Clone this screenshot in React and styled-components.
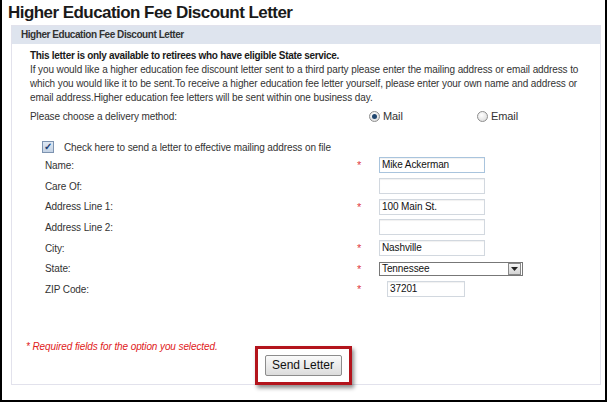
import React from "react";
import styled, { createGlobalStyle } from "styled-components";

const GlobalStyle = createGlobalStyle`
  html, body {
    margin: 0;
    padding: 0;
    background: #ffffff;
  }
  body {
    font-family: "Liberation Sans", Arial, sans-serif;
    color: #222;
  }
`;

const fields = [
  { label: "Name:", required: true, value: "Mike Ackerman", active: true },
  { label: "Care Of:", required: false, value: "" },
  { label: "Address Line 1:", required: true, value: "100 Main St." },
  { label: "Address Line 2:", required: false, value: "" },
  { label: "City:", required: true, value: "Nashville" },
  { label: "State:", required: true, value: "Tennessee", select: true },
  { label: "ZIP Code:", required: true, value: "37201", zip: true },
];

const App = () => {
  return (
    <Frame>
      <GlobalStyle />
      <Title>Higher Education Fee Discount Letter</Title>
      <Panel>
        <PanelHeader>Higher Education Fee Discount Letter</PanelHeader>
        <PanelBody>
          <Intro>
            <strong>This letter is only available to retirees who have eligible State service.</strong>
            <br />
            If you would like a higher education fee discount letter sent to a third party please enter the mailing address or email address to which you would like it to be sent.To receive a higher education fee letter yourself, please enter your own name and address or email address.Higher education fee letters will be sent within one business day.
          </Intro>
          <DeliveryRow>
            <span>Please choose a delivery method:</span>
            <RadioOption>
              <Radio checked />
              Mail
            </RadioOption>
            <RadioOption>
              <Radio />
              Email
            </RadioOption>
          </DeliveryRow>
          <CheckRow>
            <CheckBox>✓</CheckBox>
            Check here to send a letter to effective mailing address on file
          </CheckRow>
          <FieldGrid>
            {fields.map((f) => (
              <React.Fragment key={f.label}>
                <Label>{f.label}</Label>
                <Star>{f.required ? "*" : ""}</Star>
                {f.select ? (
                  <Select>
                    <span>{f.value}</span>
                    <SelectArrow>
                      <svg width="7" height="4" viewBox="0 0 7 4">
                        <path d="M0 0 L7 0 L3.5 4 Z" fill="#222" />
                      </svg>
                    </SelectArrow>
                  </Select>
                ) : (
                  <Input $active={f.active} $zip={f.zip}>{f.value}</Input>
                )}
              </React.Fragment>
            ))}
          </FieldGrid>
          <RequiredNote>* Required fields for the option you selected.</RequiredNote>
          <ButtonRow>
            <Highlight>
              <SendButton>Send Letter</SendButton>
            </Highlight>
          </ButtonRow>
        </PanelBody>
      </Panel>
    </Frame>
  );
};

const Frame = styled.div`
  width: 607px;
  height: 402px;
  box-sizing: border-box;
  border: 2px solid #000;
  border-top: none;
  padding: 0 4px 0 6px;
  overflow: hidden;
`;

const Title = styled.h1`
  margin: 0;
  padding: 2px 0 0 0;
  font-size: 17px;
  letter-spacing: -0.55px;
  line-height: 22px;
  font-weight: bold;
  color: #1a1a1a;
  height: 23px;
`;

const Panel = styled.div`
  margin-left: 3px;
  border: 1px solid #e2e2ec;
  height: 360px;
  box-sizing: border-box;
`;

const PanelHeader = styled.div`
  background: #dee4ee;
  height: 18px;
  line-height: 18px;
  padding-left: 9px;
  font-size: 10px;
  letter-spacing: -0.45px;
  font-weight: bold;
  color: #333;
`;

const PanelBody = styled.div`
  padding: 5px 0 0 14px;
  font-size: 10px;
  letter-spacing: -0.1px;
  color: #333;
`;

const Intro = styled.div`
  padding-left: 4px;
  padding-right: 12px;
  line-height: 14px;
  strong {
    color: #1a1a1a;
    letter-spacing: -0.3px;
  }
`;

const DeliveryRow = styled.div`
  display: grid;
  grid-template-columns: 339px 108px auto;
  align-items: center;
  padding-left: 4px;
  margin-top: 4px;
  height: 14px;
`;

const RadioOption = styled.span`
  display: flex;
  align-items: center;
  gap: 3px;
  font-size: 11px;
`;

const Radio = styled.span`
  width: 9px;
  height: 9px;
  border-radius: 50%;
  border: 1px solid #8e8e8e;
  background: radial-gradient(circle at 40% 35%, #ffffff, #d6d6d6);
  display: inline-flex;
  align-items: center;
  justify-content: center;
  &::after {
    content: "";
    width: 5px;
    height: 5px;
    border-radius: 50%;
    background: ${(p) => (p.checked ? "#20466f" : "transparent")};
  }
`;

const CheckRow = styled.div`
  display: flex;
  align-items: center;
  gap: 10px;
  margin-top: 17px;
  padding-left: 16px;
  height: 14px;
`;

const CheckBox = styled.span`
  width: 10px;
  height: 10px;
  border: 1px solid #7d93b0;
  background: linear-gradient(#dfe8f3, #c3d2e4);
  color: #1d3e72;
  font-size: 10px;
  line-height: 10px;
  text-align: center;
  font-weight: bold;
`;

const FieldGrid = styled.div`
  display: grid;
  grid-template-columns: 312px 22px auto;
  grid-auto-rows: 20.7px;
  align-items: center;
  padding-left: 19px;
  margin-top: 1px;
`;

const Label = styled.span`
  color: #333;
`;

const Star = styled.span`
  color: #e03a44;
  font-size: 11px;
`;

const Input = styled.div`
  width: ${(p) => (p.$zip ? "72px" : "100px")};
  height: 14px;
  margin-left: ${(p) => (p.$zip ? "8px" : "0")};
  border: 1px solid ${(p) => (p.$active ? "#a9c4dd" : "#d2d8df")};
  box-shadow: inset 0 1px 1px rgba(0, 0, 0, 0.06);
  padding: 0 2px;
  font-size: 10px;
  line-height: 14px;
  color: #111;
`;

const Select = styled.div`
  width: 140px;
  height: 12px;
  border: 1px solid #777;
  display: flex;
  justify-content: space-between;
  align-items: center;
  padding-left: 2px;
  font-size: 10px;
  color: #111;
`;

const SelectArrow = styled.span`
  width: 11px;
  height: 10px;
  margin-right: 1px;
  border: 1px solid #888;
  background: linear-gradient(#f4f4f4, #d4d4d4);
  display: flex;
  align-items: center;
  justify-content: center;
`;

const RequiredNote = styled.div`
  color: #e02020;
  font-style: italic;
  font-size: 10px;
  margin-top: 41px;
`;

const ButtonRow = styled.div`
  display: flex;
  justify-content: center;
  padding-right: 20px;
  margin-top: -6px;
`;

const Highlight = styled.div`
  padding: 6px 7px;
  border: 3px solid #b3141c;
  box-shadow: 2px 3px 4px rgba(0, 0, 0, 0.45);
  background: #fff;
`;

const SendButton = styled.button`
  font-family: "Liberation Sans", Arial, sans-serif;
  font-size: 12px;
  width: 77px;
  height: 21px;
  padding: 0;
  border: 1px solid #8c8c8c;
  border-radius: 2px;
  background: linear-gradient(#fafafa, #dcdcdc);
  color: #111;
`;

export default App;
